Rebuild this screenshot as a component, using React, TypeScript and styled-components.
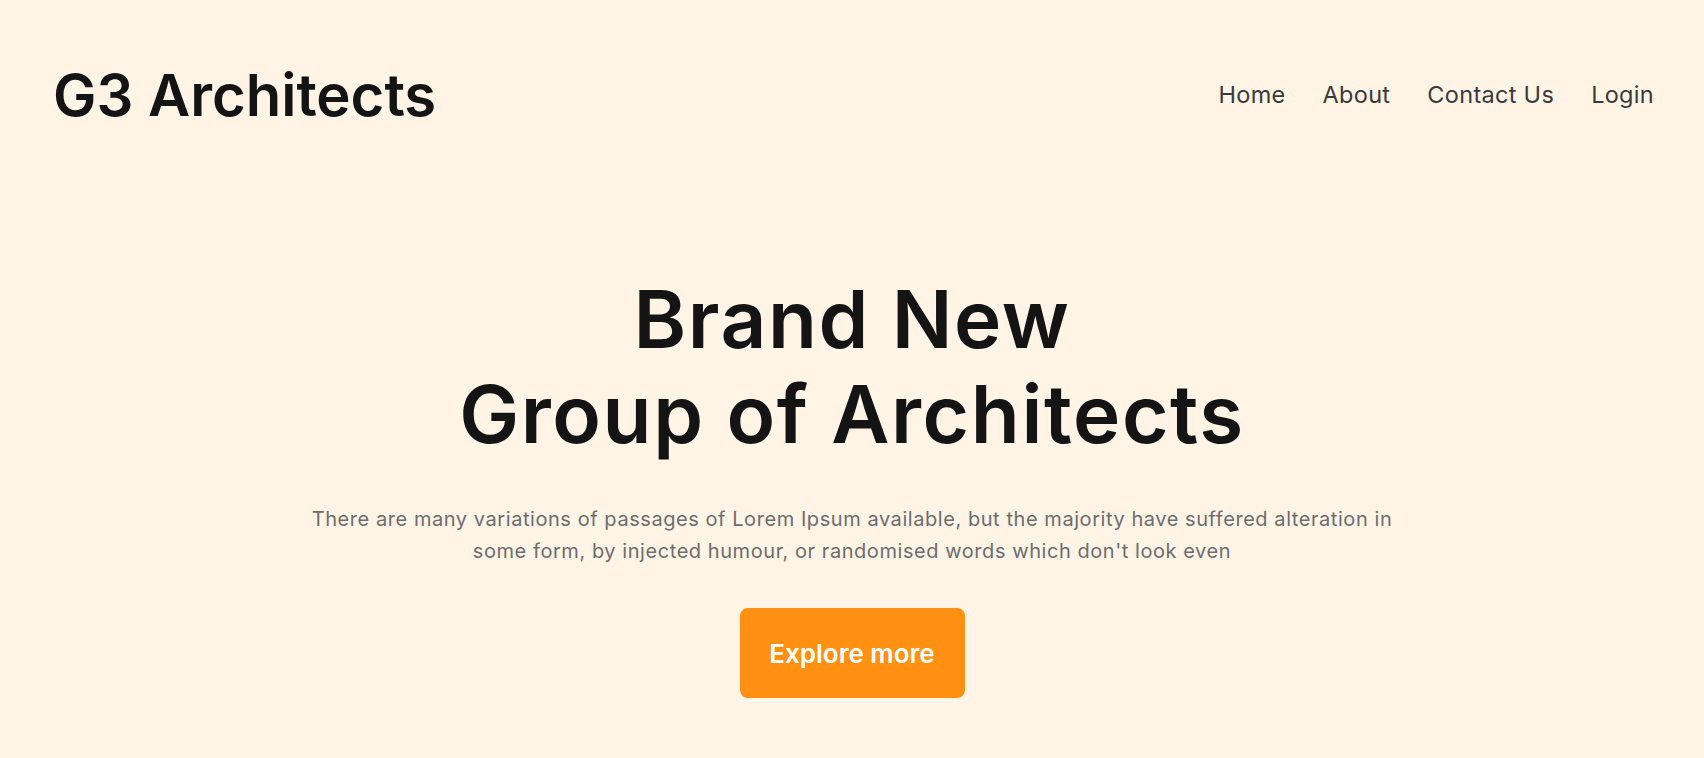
import React from "react";
import styled, { createGlobalStyle } from "styled-components";

const Global = createGlobalStyle`
  html, body { margin: 0; padding: 0; }
  body {
    background: #fff4e6;
    font-family: Inter, "Noto Sans", "DejaVu Sans", sans-serif;
    color: #141414;
  }
  * { box-sizing: border-box; }
`;

const Page = styled.div`
  min-height: 758px;
  background: #fff4e6;
`;

const Header = styled.header`
  height: 190px;
  padding: 0 50px 0 53px;
  display: flex;
  align-items: center;
  justify-content: space-between;
`;

const Logo = styled.a`
  font-size: 58px;
  font-weight: 600;
  color: #141414;
  text-decoration: none;
  line-height: 1;
`;

const Nav = styled.nav`
  display: flex;
  align-items: center;
  gap: 37px;
`;

const NavLink = styled.a`
  font-size: 23.5px;
  font-weight: 400;
  color: #3a3a3a;
  text-decoration: none;
  line-height: 1;
  letter-spacing: 0.3px;
`;

const Hero = styled.section`
  display: flex;
  flex-direction: column;
  align-items: center;
  text-align: center;
  padding-top: 81px;
`;

const Title = styled.h1`
  margin: 0;
  font-size: 80px;
  font-weight: 600;
  line-height: 95px;
  letter-spacing: 1.6px;
  color: #141414;
`;

const Lead = styled.p`
  margin: 43px 0 0;
  max-width: 1110px;
  font-size: 20px;
  line-height: 31.5px;
  letter-spacing: 0.56px;
  color: #6d6d6d;
`;

const Button = styled.button`
  margin-top: 41px;
  height: 90px;
  width: 225px;
  border: none;
  border-radius: 8px;
  background: #ff9012;
  color: #ffffff;
  font-family: inherit;
  font-size: 26px;
  font-weight: 600;
  cursor: pointer;
`;

export default function App() {
  return (
    <Page>
      <Global />
      <Header>
        <Logo href="#">G3 Architects</Logo>
        <Nav>
          <NavLink href="#">Home</NavLink>
          <NavLink href="#">About</NavLink>
          <NavLink href="#">Contact Us</NavLink>
          <NavLink href="#">Login</NavLink>
        </Nav>
      </Header>
      <Hero>
        <Title>
          Brand New
          <br />
          Group of Architects
        </Title>
        <Lead>
          There are many variations of passages of Lorem Ipsum available, but the majority have suffered alteration in
          some form, by injected humour, or randomised words which don't look even
        </Lead>
        <Button>Explore more</Button>
      </Hero>
    </Page>
  );
}
